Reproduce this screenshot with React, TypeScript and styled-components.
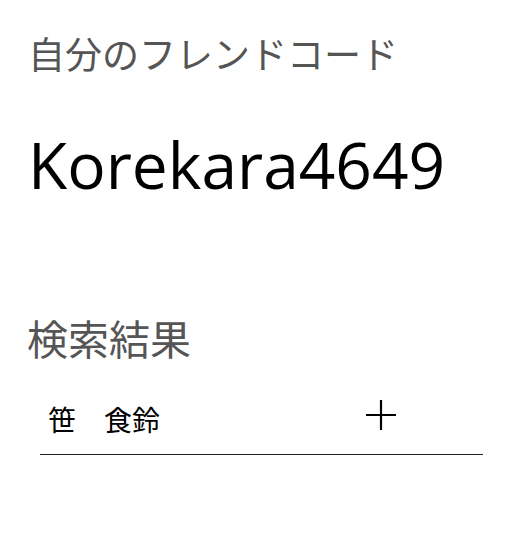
import React from "react";
import styled, { createGlobalStyle } from "styled-components";

const Global = createGlobalStyle`
  html, body { margin: 0; padding: 0; background: #fff; }
  body { font-family: "Open Sans", "Noto Sans CJK JP", sans-serif; }
`;

const Page = styled.div`
  display: flex;
  flex-direction: column;
  padding: 31px 46px 0 28px;
`;

const Heading = styled.h2<{ $size: number }>`
  margin: 0;
  font-family: "Noto Sans CJK JP", sans-serif;
  font-weight: 400;
  font-size: ${(p) => p.$size}px;
  line-height: 1.2;
  color: #555;
`;

const Code = styled.div`
  margin: 52px 0 0 0;
  font-family: "Open Sans", sans-serif;
  font-size: 64px;
  line-height: 1.2;
  color: #000;
  letter-spacing: 0;
`;

const ResultsHeading = styled(Heading)`
  margin-top: 109px;
  margin-left: -1px;
`;

const List = styled.div`
  display: flex;
  flex-direction: column;
  margin: 18px 0 0 12px;
`;

const Row = styled.div`
  display: flex;
  align-items: center;
  justify-content: space-between;
  padding: 4px 86px 0 8px;
  height: 70px;
  border-bottom: 1px solid #222;
`;

const Name = styled.span`
  font-family: "Noto Sans CJK JP", sans-serif;
  font-weight: 400;
  font-size: 28px;
  color: #000;
  white-space: pre;
`;

const AddButton = styled.button`
  border: none;
  background: none;
  padding: 0;
  margin-bottom: 8px;
  width: 32px;
  height: 32px;
  display: flex;
  align-items: center;
  justify-content: center;
  cursor: pointer;
`;

export default function App() {
  return (
    <>
      <Global />
      <Page>
        <Heading $size={37}>自分のフレンドコード</Heading>
        <Code>Korekara4649</Code>
        <ResultsHeading $size={41}>検索結果</ResultsHeading>
        <List>
          <Row>
            <Name>{"笹　食鈴"}</Name>
            <AddButton aria-label="追加">
              <svg width="32" height="32" viewBox="0 0 32 32">
                <path d="M16 1v30M1 16h30" stroke="#000" strokeWidth="2.2" fill="none" />
              </svg>
            </AddButton>
          </Row>
        </List>
      </Page>
    </>
  );
}
